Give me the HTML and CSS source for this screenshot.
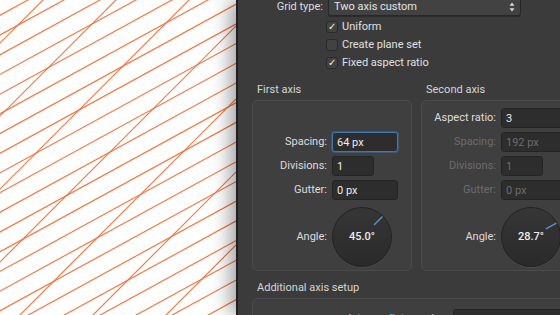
FILE: index.html
```html
<!DOCTYPE html>
<html lang="en">
<head>
	<meta charset="UTF-8">
	<title>Grid and axis manager</title>
	<link rel="stylesheet" href="styles.css">
</head>
<body>
	<div class="screen">
		<div class="canvas">
			<svg width="236" height="315" viewBox="0 0 236 315">
				<!-- first axis, 45 degrees -->
				<path class="grid" d="M-20 63L260 -217M-20 136L260 -144M-20 209L260 -71M-20 282L260 2M-20 355L260 75M-20 428L260 148M-20 501L260 221M-20 574L260 294"/>
				<!-- second axis, 28.7 degrees -->
				<path class="grid" d="M-20 26.25L260 -127.05M-20 45.95L260 -107.35M-20 65.65L260 -87.65M-20 85.35L260 -67.95M-20 105.05L260 -48.25M-20 124.75L260 -28.55M-20 144.45L260 -8.85M-20 164.15L260 10.85M-20 183.85L260 30.55M-20 203.55L260 50.25M-20 223.25L260 69.95M-20 242.95L260 89.65M-20 262.65L260 109.35M-20 282.35L260 129.05M-20 302.05L260 148.75M-20 321.75L260 168.45M-20 341.45L260 188.15M-20 361.15L260 207.85M-20 380.85L260 227.55M-20 400.55L260 247.25M-20 420.25L260 266.95M-20 439.95L260 286.65M-20 459.65L260 306.35"/>
			</svg>
		</div>

		<div class="panel">
			<div class="top-row">
				<span class="label">Grid type:</span>
				<div class="select">
					<span>Two axis custom</span>
					<svg class="arrows" width="6" height="10" viewBox="0 0 6 10">
						<path d="M3 0.5L5.5 3.8H0.5Z M3 9.5L5.5 6.2H0.5Z"/>
					</svg>
				</div>
			</div>

			<div class="checks">
				<div class="check"><span class="box">✓</span>Uniform</div>
				<div class="check"><span class="box"></span>Create plane set</div>
				<div class="check"><span class="box">✓</span>Fixed aspect ratio</div>
			</div>

			<div class="axes">
				<section class="axis">
					<h3>First axis</h3>
					<div class="group">
						<div class="row"></div>
						<div class="row">
							<span class="label">Spacing:</span>
							<span class="input focus">64 px</span>
						</div>
						<div class="row">
							<span class="label">Divisions:</span>
							<span class="input short">1</span>
						</div>
						<div class="row">
							<span class="label">Gutter:</span>
							<span class="input">0 px</span>
						</div>
						<div class="row dial-row">
							<span class="label">Angle:</span>
							<div class="dial">
								<svg class="needle" width="60" height="60" viewBox="0 0 60 60">
									<line x1="42" y1="18" x2="50.5" y2="9.5"/>
								</svg>
								<span>45.0°</span>
							</div>
						</div>
					</div>
				</section>

				<section class="axis">
					<h3>Second axis</h3>
					<div class="group">
						<div class="row">
							<span class="label">Aspect ratio:</span>
							<span class="input">3</span>
						</div>
						<div class="row off">
							<span class="label">Spacing:</span>
							<span class="input">192 px</span>
						</div>
						<div class="row off">
							<span class="label">Divisions:</span>
							<span class="input short">1</span>
						</div>
						<div class="row off">
							<span class="label">Gutter:</span>
							<span class="input">0 px</span>
						</div>
						<div class="row dial-row">
							<span class="label">Angle:</span>
							<div class="dial">
								<svg class="needle" width="60" height="60" viewBox="0 0 60 60">
									<line x1="44.9" y1="21.8" x2="55.4" y2="16.1"/>
								</svg>
								<span>28.7°</span>
							</div>
						</div>
					</div>
				</section>
			</div>

			<section class="extra">
				<h3>Additional axis setup</h3>
				<div class="group">
					<div class="row">
						<span class="label">Intermediate angles:</span>
						<span class="input long"></span>
					</div>
				</div>
			</section>
		</div>
	</div>
</body>
</html>
```

FILE: styles.css
```css
body, div, span, h3, section {
	margin: 0;
	padding: 0;
}
body {
	width: 560px;
	height: 315px;
	overflow: hidden;
	font: 11px/14px Roboto, "Liberation Sans", sans-serif;
	color: #dcdcdc;
	background: #3b3b3b;
}
.screen {
	display: flex;
	height: 315px;
}
.canvas {
	flex: 0 0 236px;
	background: #fff;
}
.canvas svg {
	display: block;
}
.grid {
	fill: none;
	stroke: #f26b32;
	stroke-width: 1.2;
	stroke-opacity: 0.9;
}
.panel {
	position: relative;
	flex: 1;
	overflow: hidden;
	background: #3b3b3b;
	border-left: 2px solid #202020;
	box-shadow: -6px 0 18px rgba(0, 0, 0, 0.38);
}
.label {
	text-align: right;
	white-space: nowrap;
}

/* grid type */
.top-row {
	display: flex;
	align-items: center;
	gap: 5px;
	margin-top: -3px;
}
.top-row .label {
	width: 85px;
}
.select {
	display: flex;
	align-items: center;
	justify-content: space-between;
	box-sizing: border-box;
	width: 193px;
	height: 19px;
	padding: 0 5px 0 5px;
	background: #424242;
	border: 1px solid #272727;
	border-radius: 3px;
	box-shadow: 0 1px 0 rgba(0, 0, 0, 0.25);
	color: #e4e4e4;
}
.arrows {
	fill: #d8d8d8;
}

/* checkboxes */
.checks {
	display: flex;
	flex-direction: column;
	gap: 6px;
	margin-top: 5px;
	padding-left: 88px;
}
.check {
	display: flex;
	align-items: center;
	gap: 4px;
	height: 12px;
	color: #e0e0e0;
}
.box {
	display: flex;
	align-items: center;
	justify-content: center;
	box-sizing: border-box;
	width: 12px;
	height: 12px;
	background: #424242;
	border: 1px solid #2a2a2a;
	border-radius: 3px;
	font-size: 10px;
	color: #f0f0f0;
}

/* axis groups */
h3 {
	padding-left: 5px;
	margin-bottom: 3px;
	font-size: 11px;
	font-weight: 400;
	color: #d6d6d6;
}
.axes {
	display: flex;
	gap: 9px;
	margin-top: 14px;
	padding-left: 14px;
}
.axis {
	flex: 0 0 160px;
}
.group {
	display: flex;
	flex-direction: column;
	gap: 4px;
	padding: 7px 0 3px;
	background: #3f3f3f;
	border: 1px solid #4a4a4a;
	border-radius: 5px;
}
.row {
	display: flex;
	align-items: center;
	gap: 5px;
	height: 20px;
}
.row .label {
	width: 74px;
}
.row.off {
	color: #6c6c6c;
}
.input {
	box-sizing: border-box;
	width: 66px;
	height: 20px;
	padding: 0 4px;
	line-height: 19px;
	background: #2d2d2d;
	border: 1px solid #242424;
	border-radius: 3px;
	color: #ececec;
}
.input.short {
	width: 42px;
}
.input.focus {
	border-color: #3b78b6;
	box-shadow: 0 0 0 1px rgba(59, 120, 182, 0.45);
}
.row.off .input {
	color: #6c6c6c;
}
.dial-row {
	height: 60px;
	margin-top: 3px;
}
.dial {
	position: relative;
	display: flex;
	align-items: center;
	justify-content: center;
	box-sizing: border-box;
	width: 60px;
	height: 60px;
	border-radius: 50%;
	background: linear-gradient(#363636, #2a2a2a);
	border: 1px solid #222;
	box-shadow: 0 1px 0 rgba(255, 255, 255, 0.05);
	font-weight: 500;
	color: #ececec;
}
.needle {
	position: absolute;
	top: -1px;
	left: -1px;
	stroke: #5d8fcc;
	stroke-width: 1.4;
}

/* additional setup */
.extra {
	width: 330px;
	margin-top: 10px;
	padding-left: 14px;
}
.extra .group {
	padding-top: 10px;
}
.extra .row .label {
	width: 195px;
}
.input.long {
	width: 120px;
}
```
